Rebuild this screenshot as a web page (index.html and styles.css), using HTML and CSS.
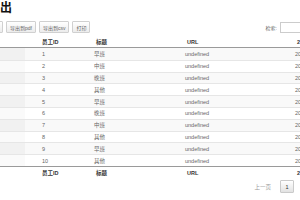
FILE: index.html
```html
<!DOCTYPE html>
<html lang="zh">
<head>
<meta charset="utf-8">
<link rel="stylesheet" href="styles.css">
</head>
<body>
<div class="page">
  <h2 class="title">出</h2>
  <div class="toolbar">
    <div class="buttons">
      <span class="btn btn-first"></span>
      <span class="btn">导出到pdf</span>
      <span class="btn">导出到csv</span>
      <span class="btn">打印</span>
    </div>
    <label class="search">检索:<span class="search-input"></span></label>
  </div>
  <table class="grid">
    <colgroup>
      <col class="c0"><col class="c1"><col class="c2"><col class="c3"><col class="c4">
    </colgroup>
    <thead>
      <tr><th></th><th class="p1">员工ID</th><th>标题</th><th>URL</th><th>2</th></tr>
    </thead>
    <tbody>
      <tr class="odd"><td class="s"></td><td class="p1">1</td><td>早班</td><td>undefined</td><td>20</td></tr>
      <tr><td class="s"></td><td class="p1">2</td><td>中班</td><td>undefined</td><td>20</td></tr>
      <tr class="odd"><td class="s"></td><td class="p1">3</td><td>晚班</td><td>undefined</td><td>20</td></tr>
      <tr><td class="s"></td><td class="p1">4</td><td>其他</td><td>undefined</td><td>20</td></tr>
      <tr class="odd"><td class="s"></td><td class="p1">5</td><td>早班</td><td>undefined</td><td>20</td></tr>
      <tr><td class="s"></td><td class="p1">6</td><td>晚班</td><td>undefined</td><td>20</td></tr>
      <tr class="odd"><td class="s"></td><td class="p1">7</td><td>中班</td><td>undefined</td><td>20</td></tr>
      <tr><td class="s"></td><td class="p1">8</td><td>其他</td><td>undefined</td><td>20</td></tr>
      <tr class="odd"><td class="s"></td><td class="p1">9</td><td>早班</td><td>undefined</td><td>20</td></tr>
      <tr><td class="s"></td><td class="p1">10</td><td>其他</td><td>undefined</td><td>20</td></tr>
    </tbody>
    <tfoot>
      <tr><th></th><th class="p1">员工ID</th><th>标题</th><th>URL</th><th>2</th></tr>
    </tfoot>
  </table>
  <div class="pager">
    <span class="prev">上一页</span>
    <span class="page-btn">1</span>
  </div>
</div>
</body>
</html>
```
FILE: styles.css
```css
html, body {
  margin: 0;
  padding: 0;
  overflow: hidden;
  background: #fff;
}
body {
  font-family: "Liberation Sans", "Noto Sans CJK SC", sans-serif;
  color: #333;
  width: 300px;
  height: 200px;
}
.page {
  width: 300px;
}
.title {
  margin: 2px 0 0 0;
  font-size: 12px;
  line-height: 13px;
  font-weight: bold;
  color: #111;
}
.toolbar {
  display: flex;
  justify-content: space-between;
  align-items: center;
  margin-top: 6px;
  height: 12px;
}
.buttons {
  display: flex;
  gap: 3px;
  margin-left: -37px;
}
.btn {
  display: flex;
  align-items: center;
  justify-content: center;
  height: 10px;
  padding: 0 3px;
  border: 1px solid #d0d0d0;
  border-radius: 1px;
  background: linear-gradient(#ffffff, #ececec);
  font-size: 5px;
  color: #666;
  white-space: nowrap;
}
.btn-first {
  width: 32px;
}
.search {
  display: flex;
  align-items: center;
  gap: 3px;
  font-size: 5px;
  color: #666;
  margin-right: -10px;
}
.search-input {
  width: 28px;
  height: 9px;
  border: 1px solid #ccc;
  background: #fff;
}
.grid {
  margin-top: 4px;
  width: 340px;
  table-layout: fixed;
  border-collapse: separate;
  border-spacing: 0;
  font-size: 5.5px;
}
.c0 { width: 25px; }
.c1 { width: 64px; }
.c2 { width: 91px; }
.c3 { width: 110px; }
.c4 { width: 50px; }
.grid th, .grid td {
  text-align: left;
  padding: 0 5px;
  white-space: nowrap;
  overflow: hidden;
}
.grid th {
  font-weight: bold;
  color: #333;
  height: 10px;
  padding-left: 7px;
}
.grid th.p1 { padding-left: 17px; }
.grid td.p1 { padding-left: 17px; }
.grid thead th {
  border-bottom: 1px solid #9a9a9a;
}
.grid tbody td {
  height: 10.8px;
  border-top: 1px solid #e6e6e6;
  color: #666;
}
.grid tbody tr:first-child td {
  border-top: none;
  height: 11.8px;
}
.grid tbody tr.odd td {
  background: #f9f9f9;
}
.grid tbody tr.odd td.s {
  background: #f1f1f1;
}
.grid tbody td.s {
  background: #fafafa;
}
.grid tfoot th {
  border-top: 1px solid #9a9a9a;
  height: 13px;
}
.pager {
  display: flex;
  justify-content: flex-end;
  align-items: center;
  gap: 9px;
  margin-top: 0;
  padding-right: 6px;
  height: 14px;
}
.prev {
  font-size: 5.5px;
  color: #999;
}
.page-btn {
  display: flex;
  align-items: center;
  justify-content: center;
  width: 12px;
  height: 11px;
  border: 1px solid #cacaca;
  border-radius: 1px;
  background: linear-gradient(#ffffff, #e2e2e2);
  font-size: 5.5px;
  color: #333;
}
```
